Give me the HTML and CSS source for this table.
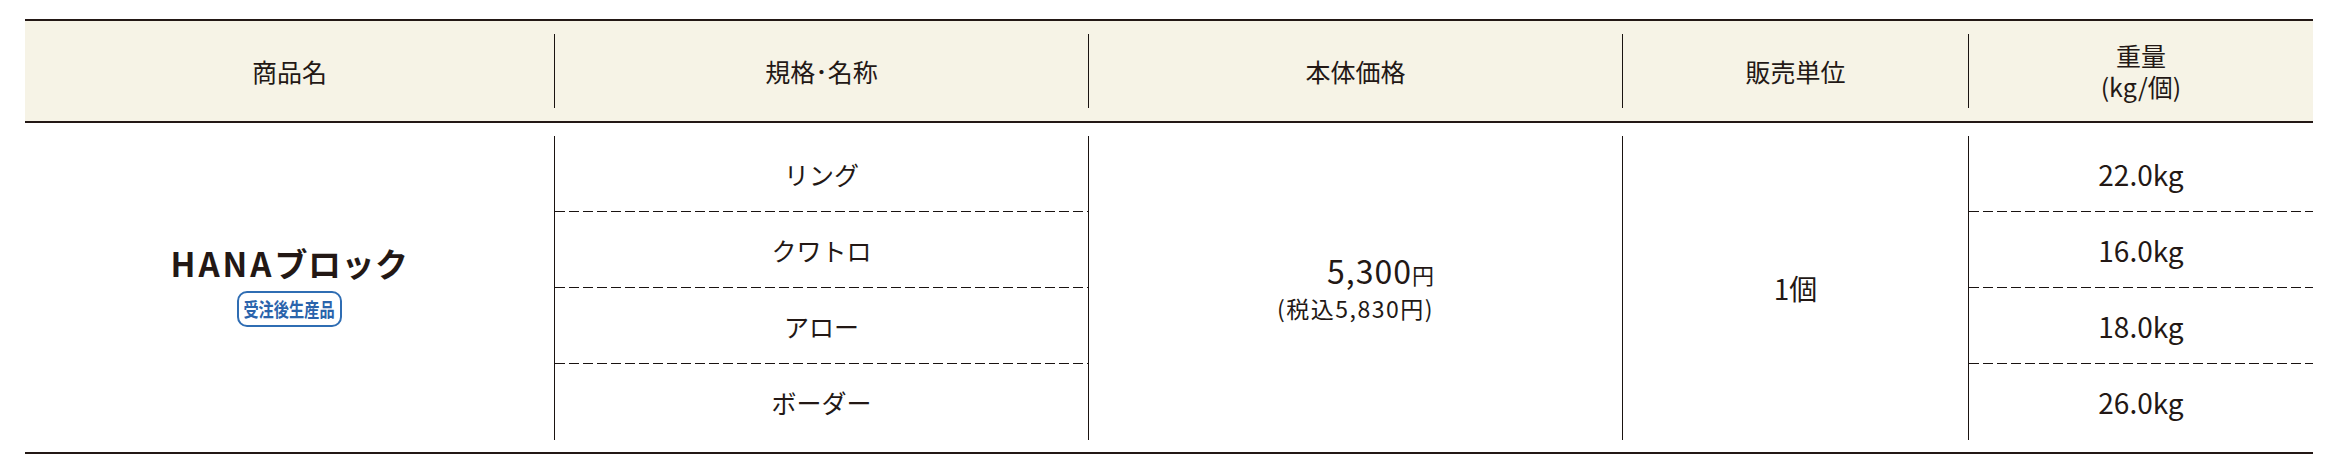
FILE: index.html
```html
<!DOCTYPE html>
<html lang="ja">
<head>
<meta charset="utf-8">
<title>HANAブロック 仕様</title>
<link rel="stylesheet" href="styles.css">
</head>
<body>
<div class="spec">
  <div class="spec-head">
    <div class="hcell">商品名</div>
    <div class="hcell">規格･名称</div>
    <div class="hcell">本体価格</div>
    <div class="hcell">販売単位</div>
    <div class="hcell">重量<br>(kg/個)</div>
  </div>
  <div class="spec-body">
    <div class="bcell name-cell">
      <div class="name-group">
        <div class="product-name"><span class="latin">HANA</span>ブロック</div>
        <div class="badge"><span class="badge-text">受注後生産品</span></div>
      </div>
    </div>
    <div class="bcell list-cell">
      <div class="item">リング</div>
      <div class="item">クワトロ</div>
      <div class="item">アロー</div>
      <div class="item">ボーダー</div>
    </div>
    <div class="bcell">
      <div class="price">
        <div class="price-main">5,300<span class="yen">円</span></div>
        <div class="price-tax">(税込5,830円)</div>
      </div>
    </div>
    <div class="bcell unit">1個</div>
    <div class="bcell list-cell weight">
      <div class="item">22.0kg</div>
      <div class="item">16.0kg</div>
      <div class="item">18.0kg</div>
      <div class="item">26.0kg</div>
    </div>
  </div>
</div>
</body>
</html>
```

FILE: styles.css
```css
* { box-sizing: border-box; }

body {
  margin: 0;
  background: #ffffff;
  color: #231815;
  font-family: "Noto Sans CJK JP", "Noto Sans", sans-serif;
}

.spec {
  margin: 19px 0 0 25px;
  width: 2288px;
}

.spec-head,
.spec-body {
  display: grid;
  grid-template-columns: 529px 534px 534px 346px 345px;
}

.spec-head {
  background: #f6f3e6;
  border-top: 2px solid #231815;
  border-bottom: 2px solid #231815;
  padding: 13px 0;
}

.hcell {
  height: 74px;
  display: flex;
  align-items: center;
  justify-content: center;
  text-align: center;
  font-size: 25px;
  line-height: 31px;
}

.hcell + .hcell,
.bcell + .bcell {
  border-left: 1px solid #1a1311;
}

.spec-body {
  padding: 13px 0 12px;
  border-bottom: 2px solid #231815;
}

.bcell {
  height: 304px;
  display: flex;
  flex-direction: column;
  align-items: center;
  justify-content: center;
}

.name-group {
  display: flex;
  flex-direction: column;
  align-items: center;
  padding-bottom: 6px;
}

.product-name {
  font-size: 33px;
  font-weight: 700;
  line-height: 40px;
  letter-spacing: 0.5px;
}

.product-name .latin {
  letter-spacing: 3px;
}

.badge {
  margin-top: 8px;
  width: 105px;
  height: 36px;
  border: 2px solid #2f6db3;
  border-radius: 10px;
  color: #2a63ab;
  display: flex;
  align-items: center;
  justify-content: center;
}

.badge-text {
  display: inline-block;
  font-size: 19px;
  font-weight: 700;
  line-height: 24px;
  white-space: nowrap;
  transform: scaleX(0.8);
}

.list-cell {
  justify-content: flex-start;
  align-items: stretch;
}

.item {
  height: 75px;
  display: flex;
  align-items: center;
  justify-content: center;
  font-size: 25px;
}

.item + .item {
  height: 76px;
  padding-top: 1px;
  background-image: linear-gradient(to right, #1a1311 0, #1a1311 10px, transparent 10px, transparent 14px);
  background-size: 14px 1px;
  background-repeat: repeat-x;
  background-position: left top;
}

.weight .item {
  font-size: 28px;
}

.price {
  text-align: right;
}

.price-main {
  font-size: 32px;
  line-height: 36px;
  letter-spacing: 1px;
}

.price-main .yen {
  font-size: 22px;
  letter-spacing: 0;
}

.price-tax {
  font-size: 23px;
  line-height: 32px;
  letter-spacing: 1.5px;
}

.unit {
  font-size: 28px;
}
```
